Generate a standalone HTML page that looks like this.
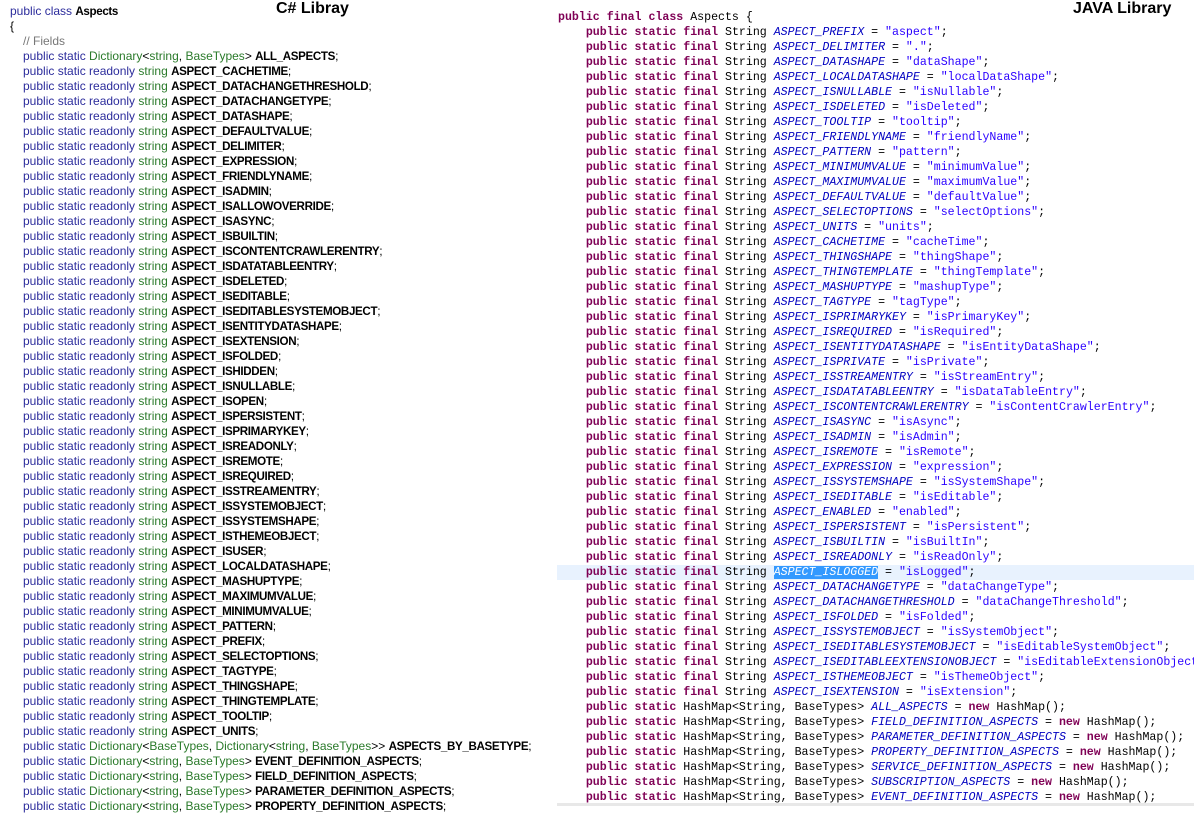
<!DOCTYPE html>
<html><head><meta charset="utf-8"><style>
body{margin:0;width:1194px;height:813px;background:#fff;overflow:hidden;position:relative}
#cs{position:absolute;left:10px;top:4px;font-family:"Liberation Sans",sans-serif;font-size:12px;line-height:15px;color:#000}
#cs div{white-space:pre;height:15px;padding-left:13px}
#cs .k{color:#2c2c9c}#cs .t{color:#2a7a2a}#cs b{font-weight:bold;color:#000;font-size:11.6px;letter-spacing:-0.35px}#cs .c{color:#777}
#cs div.z{padding-left:0}
.title{position:absolute;font-family:"Liberation Sans",sans-serif;font-weight:bold;font-size:16px;color:#000}
#jv{position:absolute;left:557px;top:10px;width:637px;font-family:"Liberation Mono",monospace;font-size:11.6px;line-height:15px;color:#000}
#jv div{padding-left:1px;white-space:pre;height:15px}
#jv .k{color:#7f0055;font-weight:bold}#jv .i{color:#0000c0;font-style:italic}#jv .s{color:#2a00ff}
#jv .hl{background:#e8f2fe}#jv .sel{background:#3399ff;color:#fff}
#bar{position:absolute;left:557px;top:803px;width:637px;height:3px;background:#e8e8e8}
</style></head><body>
<div class="title" style="left:276px;top:0px">C# Libray</div>
<div class="title" style="left:1073px;top:0px">JAVA Library</div>
<div id="cs"><div class="z"><span class="k">public class</span> <b>Aspects</b></div><div class="z">{</div><div><span class="c">// Fields</span></div><div><span class="k">public static</span> <span class="t">Dictionary</span>&lt;<span class="t">string</span>, <span class="t">BaseTypes</span>&gt; <b>ALL_ASPECTS</b>;</div><div><span class="k">public static readonly</span> <span class="t">string</span> <b>ASPECT_CACHETIME</b>;</div><div><span class="k">public static readonly</span> <span class="t">string</span> <b>ASPECT_DATACHANGETHRESHOLD</b>;</div><div><span class="k">public static readonly</span> <span class="t">string</span> <b>ASPECT_DATACHANGETYPE</b>;</div><div><span class="k">public static readonly</span> <span class="t">string</span> <b>ASPECT_DATASHAPE</b>;</div><div><span class="k">public static readonly</span> <span class="t">string</span> <b>ASPECT_DEFAULTVALUE</b>;</div><div><span class="k">public static readonly</span> <span class="t">string</span> <b>ASPECT_DELIMITER</b>;</div><div><span class="k">public static readonly</span> <span class="t">string</span> <b>ASPECT_EXPRESSION</b>;</div><div><span class="k">public static readonly</span> <span class="t">string</span> <b>ASPECT_FRIENDLYNAME</b>;</div><div><span class="k">public static readonly</span> <span class="t">string</span> <b>ASPECT_ISADMIN</b>;</div><div><span class="k">public static readonly</span> <span class="t">string</span> <b>ASPECT_ISALLOWOVERRIDE</b>;</div><div><span class="k">public static readonly</span> <span class="t">string</span> <b>ASPECT_ISASYNC</b>;</div><div><span class="k">public static readonly</span> <span class="t">string</span> <b>ASPECT_ISBUILTIN</b>;</div><div><span class="k">public static readonly</span> <span class="t">string</span> <b>ASPECT_ISCONTENTCRAWLERENTRY</b>;</div><div><span class="k">public static readonly</span> <span class="t">string</span> <b>ASPECT_ISDATATABLEENTRY</b>;</div><div><span class="k">public static readonly</span> <span class="t">string</span> <b>ASPECT_ISDELETED</b>;</div><div><span class="k">public static readonly</span> <span class="t">string</span> <b>ASPECT_ISEDITABLE</b>;</div><div><span class="k">public static readonly</span> <span class="t">string</span> <b>ASPECT_ISEDITABLESYSTEMOBJECT</b>;</div><div><span class="k">public static readonly</span> <span class="t">string</span> <b>ASPECT_ISENTITYDATASHAPE</b>;</div><div><span class="k">public static readonly</span> <span class="t">string</span> <b>ASPECT_ISEXTENSION</b>;</div><div><span class="k">public static readonly</span> <span class="t">string</span> <b>ASPECT_ISFOLDED</b>;</div><div><span class="k">public static readonly</span> <span class="t">string</span> <b>ASPECT_ISHIDDEN</b>;</div><div><span class="k">public static readonly</span> <span class="t">string</span> <b>ASPECT_ISNULLABLE</b>;</div><div><span class="k">public static readonly</span> <span class="t">string</span> <b>ASPECT_ISOPEN</b>;</div><div><span class="k">public static readonly</span> <span class="t">string</span> <b>ASPECT_ISPERSISTENT</b>;</div><div><span class="k">public static readonly</span> <span class="t">string</span> <b>ASPECT_ISPRIMARYKEY</b>;</div><div><span class="k">public static readonly</span> <span class="t">string</span> <b>ASPECT_ISREADONLY</b>;</div><div><span class="k">public static readonly</span> <span class="t">string</span> <b>ASPECT_ISREMOTE</b>;</div><div><span class="k">public static readonly</span> <span class="t">string</span> <b>ASPECT_ISREQUIRED</b>;</div><div><span class="k">public static readonly</span> <span class="t">string</span> <b>ASPECT_ISSTREAMENTRY</b>;</div><div><span class="k">public static readonly</span> <span class="t">string</span> <b>ASPECT_ISSYSTEMOBJECT</b>;</div><div><span class="k">public static readonly</span> <span class="t">string</span> <b>ASPECT_ISSYSTEMSHAPE</b>;</div><div><span class="k">public static readonly</span> <span class="t">string</span> <b>ASPECT_ISTHEMEOBJECT</b>;</div><div><span class="k">public static readonly</span> <span class="t">string</span> <b>ASPECT_ISUSER</b>;</div><div><span class="k">public static readonly</span> <span class="t">string</span> <b>ASPECT_LOCALDATASHAPE</b>;</div><div><span class="k">public static readonly</span> <span class="t">string</span> <b>ASPECT_MASHUPTYPE</b>;</div><div><span class="k">public static readonly</span> <span class="t">string</span> <b>ASPECT_MAXIMUMVALUE</b>;</div><div><span class="k">public static readonly</span> <span class="t">string</span> <b>ASPECT_MINIMUMVALUE</b>;</div><div><span class="k">public static readonly</span> <span class="t">string</span> <b>ASPECT_PATTERN</b>;</div><div><span class="k">public static readonly</span> <span class="t">string</span> <b>ASPECT_PREFIX</b>;</div><div><span class="k">public static readonly</span> <span class="t">string</span> <b>ASPECT_SELECTOPTIONS</b>;</div><div><span class="k">public static readonly</span> <span class="t">string</span> <b>ASPECT_TAGTYPE</b>;</div><div><span class="k">public static readonly</span> <span class="t">string</span> <b>ASPECT_THINGSHAPE</b>;</div><div><span class="k">public static readonly</span> <span class="t">string</span> <b>ASPECT_THINGTEMPLATE</b>;</div><div><span class="k">public static readonly</span> <span class="t">string</span> <b>ASPECT_TOOLTIP</b>;</div><div><span class="k">public static readonly</span> <span class="t">string</span> <b>ASPECT_UNITS</b>;</div><div><span class="k">public static</span> <span class="t">Dictionary</span>&lt;<span class="t">BaseTypes</span>, <span class="t">Dictionary</span>&lt;<span class="t">string</span>, <span class="t">BaseTypes</span>&gt;&gt; <b>ASPECTS_BY_BASETYPE</b>;</div><div><span class="k">public static</span> <span class="t">Dictionary</span>&lt;<span class="t">string</span>, <span class="t">BaseTypes</span>&gt; <b>EVENT_DEFINITION_ASPECTS</b>;</div><div><span class="k">public static</span> <span class="t">Dictionary</span>&lt;<span class="t">string</span>, <span class="t">BaseTypes</span>&gt; <b>FIELD_DEFINITION_ASPECTS</b>;</div><div><span class="k">public static</span> <span class="t">Dictionary</span>&lt;<span class="t">string</span>, <span class="t">BaseTypes</span>&gt; <b>PARAMETER_DEFINITION_ASPECTS</b>;</div><div><span class="k">public static</span> <span class="t">Dictionary</span>&lt;<span class="t">string</span>, <span class="t">BaseTypes</span>&gt; <b>PROPERTY_DEFINITION_ASPECTS</b>;</div></div>
<div id="jv"><div><span class="k">public final class</span> Aspects {</div><div>    <span class="k">public static final</span> String <span class="i">ASPECT_PREFIX</span> = <span class="s">"aspect"</span>;</div><div>    <span class="k">public static final</span> String <span class="i">ASPECT_DELIMITER</span> = <span class="s">"."</span>;</div><div>    <span class="k">public static final</span> String <span class="i">ASPECT_DATASHAPE</span> = <span class="s">"dataShape"</span>;</div><div>    <span class="k">public static final</span> String <span class="i">ASPECT_LOCALDATASHAPE</span> = <span class="s">"localDataShape"</span>;</div><div>    <span class="k">public static final</span> String <span class="i">ASPECT_ISNULLABLE</span> = <span class="s">"isNullable"</span>;</div><div>    <span class="k">public static final</span> String <span class="i">ASPECT_ISDELETED</span> = <span class="s">"isDeleted"</span>;</div><div>    <span class="k">public static final</span> String <span class="i">ASPECT_TOOLTIP</span> = <span class="s">"tooltip"</span>;</div><div>    <span class="k">public static final</span> String <span class="i">ASPECT_FRIENDLYNAME</span> = <span class="s">"friendlyName"</span>;</div><div>    <span class="k">public static final</span> String <span class="i">ASPECT_PATTERN</span> = <span class="s">"pattern"</span>;</div><div>    <span class="k">public static final</span> String <span class="i">ASPECT_MINIMUMVALUE</span> = <span class="s">"minimumValue"</span>;</div><div>    <span class="k">public static final</span> String <span class="i">ASPECT_MAXIMUMVALUE</span> = <span class="s">"maximumValue"</span>;</div><div>    <span class="k">public static final</span> String <span class="i">ASPECT_DEFAULTVALUE</span> = <span class="s">"defaultValue"</span>;</div><div>    <span class="k">public static final</span> String <span class="i">ASPECT_SELECTOPTIONS</span> = <span class="s">"selectOptions"</span>;</div><div>    <span class="k">public static final</span> String <span class="i">ASPECT_UNITS</span> = <span class="s">"units"</span>;</div><div>    <span class="k">public static final</span> String <span class="i">ASPECT_CACHETIME</span> = <span class="s">"cacheTime"</span>;</div><div>    <span class="k">public static final</span> String <span class="i">ASPECT_THINGSHAPE</span> = <span class="s">"thingShape"</span>;</div><div>    <span class="k">public static final</span> String <span class="i">ASPECT_THINGTEMPLATE</span> = <span class="s">"thingTemplate"</span>;</div><div>    <span class="k">public static final</span> String <span class="i">ASPECT_MASHUPTYPE</span> = <span class="s">"mashupType"</span>;</div><div>    <span class="k">public static final</span> String <span class="i">ASPECT_TAGTYPE</span> = <span class="s">"tagType"</span>;</div><div>    <span class="k">public static final</span> String <span class="i">ASPECT_ISPRIMARYKEY</span> = <span class="s">"isPrimaryKey"</span>;</div><div>    <span class="k">public static final</span> String <span class="i">ASPECT_ISREQUIRED</span> = <span class="s">"isRequired"</span>;</div><div>    <span class="k">public static final</span> String <span class="i">ASPECT_ISENTITYDATASHAPE</span> = <span class="s">"isEntityDataShape"</span>;</div><div>    <span class="k">public static final</span> String <span class="i">ASPECT_ISPRIVATE</span> = <span class="s">"isPrivate"</span>;</div><div>    <span class="k">public static final</span> String <span class="i">ASPECT_ISSTREAMENTRY</span> = <span class="s">"isStreamEntry"</span>;</div><div>    <span class="k">public static final</span> String <span class="i">ASPECT_ISDATATABLEENTRY</span> = <span class="s">"isDataTableEntry"</span>;</div><div>    <span class="k">public static final</span> String <span class="i">ASPECT_ISCONTENTCRAWLERENTRY</span> = <span class="s">"isContentCrawlerEntry"</span>;</div><div>    <span class="k">public static final</span> String <span class="i">ASPECT_ISASYNC</span> = <span class="s">"isAsync"</span>;</div><div>    <span class="k">public static final</span> String <span class="i">ASPECT_ISADMIN</span> = <span class="s">"isAdmin"</span>;</div><div>    <span class="k">public static final</span> String <span class="i">ASPECT_ISREMOTE</span> = <span class="s">"isRemote"</span>;</div><div>    <span class="k">public static final</span> String <span class="i">ASPECT_EXPRESSION</span> = <span class="s">"expression"</span>;</div><div>    <span class="k">public static final</span> String <span class="i">ASPECT_ISSYSTEMSHAPE</span> = <span class="s">"isSystemShape"</span>;</div><div>    <span class="k">public static final</span> String <span class="i">ASPECT_ISEDITABLE</span> = <span class="s">"isEditable"</span>;</div><div>    <span class="k">public static final</span> String <span class="i">ASPECT_ENABLED</span> = <span class="s">"enabled"</span>;</div><div>    <span class="k">public static final</span> String <span class="i">ASPECT_ISPERSISTENT</span> = <span class="s">"isPersistent"</span>;</div><div>    <span class="k">public static final</span> String <span class="i">ASPECT_ISBUILTIN</span> = <span class="s">"isBuiltIn"</span>;</div><div>    <span class="k">public static final</span> String <span class="i">ASPECT_ISREADONLY</span> = <span class="s">"isReadOnly"</span>;</div><div class="hl">    <span class="k">public static final</span> String <span class="i sel">ASPECT_ISLOGGED</span> = <span class="s">"isLogged"</span>;</div><div>    <span class="k">public static final</span> String <span class="i">ASPECT_DATACHANGETYPE</span> = <span class="s">"dataChangeType"</span>;</div><div>    <span class="k">public static final</span> String <span class="i">ASPECT_DATACHANGETHRESHOLD</span> = <span class="s">"dataChangeThreshold"</span>;</div><div>    <span class="k">public static final</span> String <span class="i">ASPECT_ISFOLDED</span> = <span class="s">"isFolded"</span>;</div><div>    <span class="k">public static final</span> String <span class="i">ASPECT_ISSYSTEMOBJECT</span> = <span class="s">"isSystemObject"</span>;</div><div>    <span class="k">public static final</span> String <span class="i">ASPECT_ISEDITABLESYSTEMOBJECT</span> = <span class="s">"isEditableSystemObject"</span>;</div><div>    <span class="k">public static final</span> String <span class="i">ASPECT_ISEDITABLEEXTENSIONOBJECT</span> = <span class="s">"isEditableExtensionObject"</span>;</div><div>    <span class="k">public static final</span> String <span class="i">ASPECT_ISTHEMEOBJECT</span> = <span class="s">"isThemeObject"</span>;</div><div>    <span class="k">public static final</span> String <span class="i">ASPECT_ISEXTENSION</span> = <span class="s">"isExtension"</span>;</div><div>    <span class="k">public static</span> HashMap&lt;String, BaseTypes&gt; <span class="i">ALL_ASPECTS</span> = <span class="k">new</span> HashMap();</div><div>    <span class="k">public static</span> HashMap&lt;String, BaseTypes&gt; <span class="i">FIELD_DEFINITION_ASPECTS</span> = <span class="k">new</span> HashMap();</div><div>    <span class="k">public static</span> HashMap&lt;String, BaseTypes&gt; <span class="i">PARAMETER_DEFINITION_ASPECTS</span> = <span class="k">new</span> HashMap();</div><div>    <span class="k">public static</span> HashMap&lt;String, BaseTypes&gt; <span class="i">PROPERTY_DEFINITION_ASPECTS</span> = <span class="k">new</span> HashMap();</div><div>    <span class="k">public static</span> HashMap&lt;String, BaseTypes&gt; <span class="i">SERVICE_DEFINITION_ASPECTS</span> = <span class="k">new</span> HashMap();</div><div>    <span class="k">public static</span> HashMap&lt;String, BaseTypes&gt; <span class="i">SUBSCRIPTION_ASPECTS</span> = <span class="k">new</span> HashMap();</div><div>    <span class="k">public static</span> HashMap&lt;String, BaseTypes&gt; <span class="i">EVENT_DEFINITION_ASPECTS</span> = <span class="k">new</span> HashMap();</div></div>
<div id="bar"></div>
</body></html>
